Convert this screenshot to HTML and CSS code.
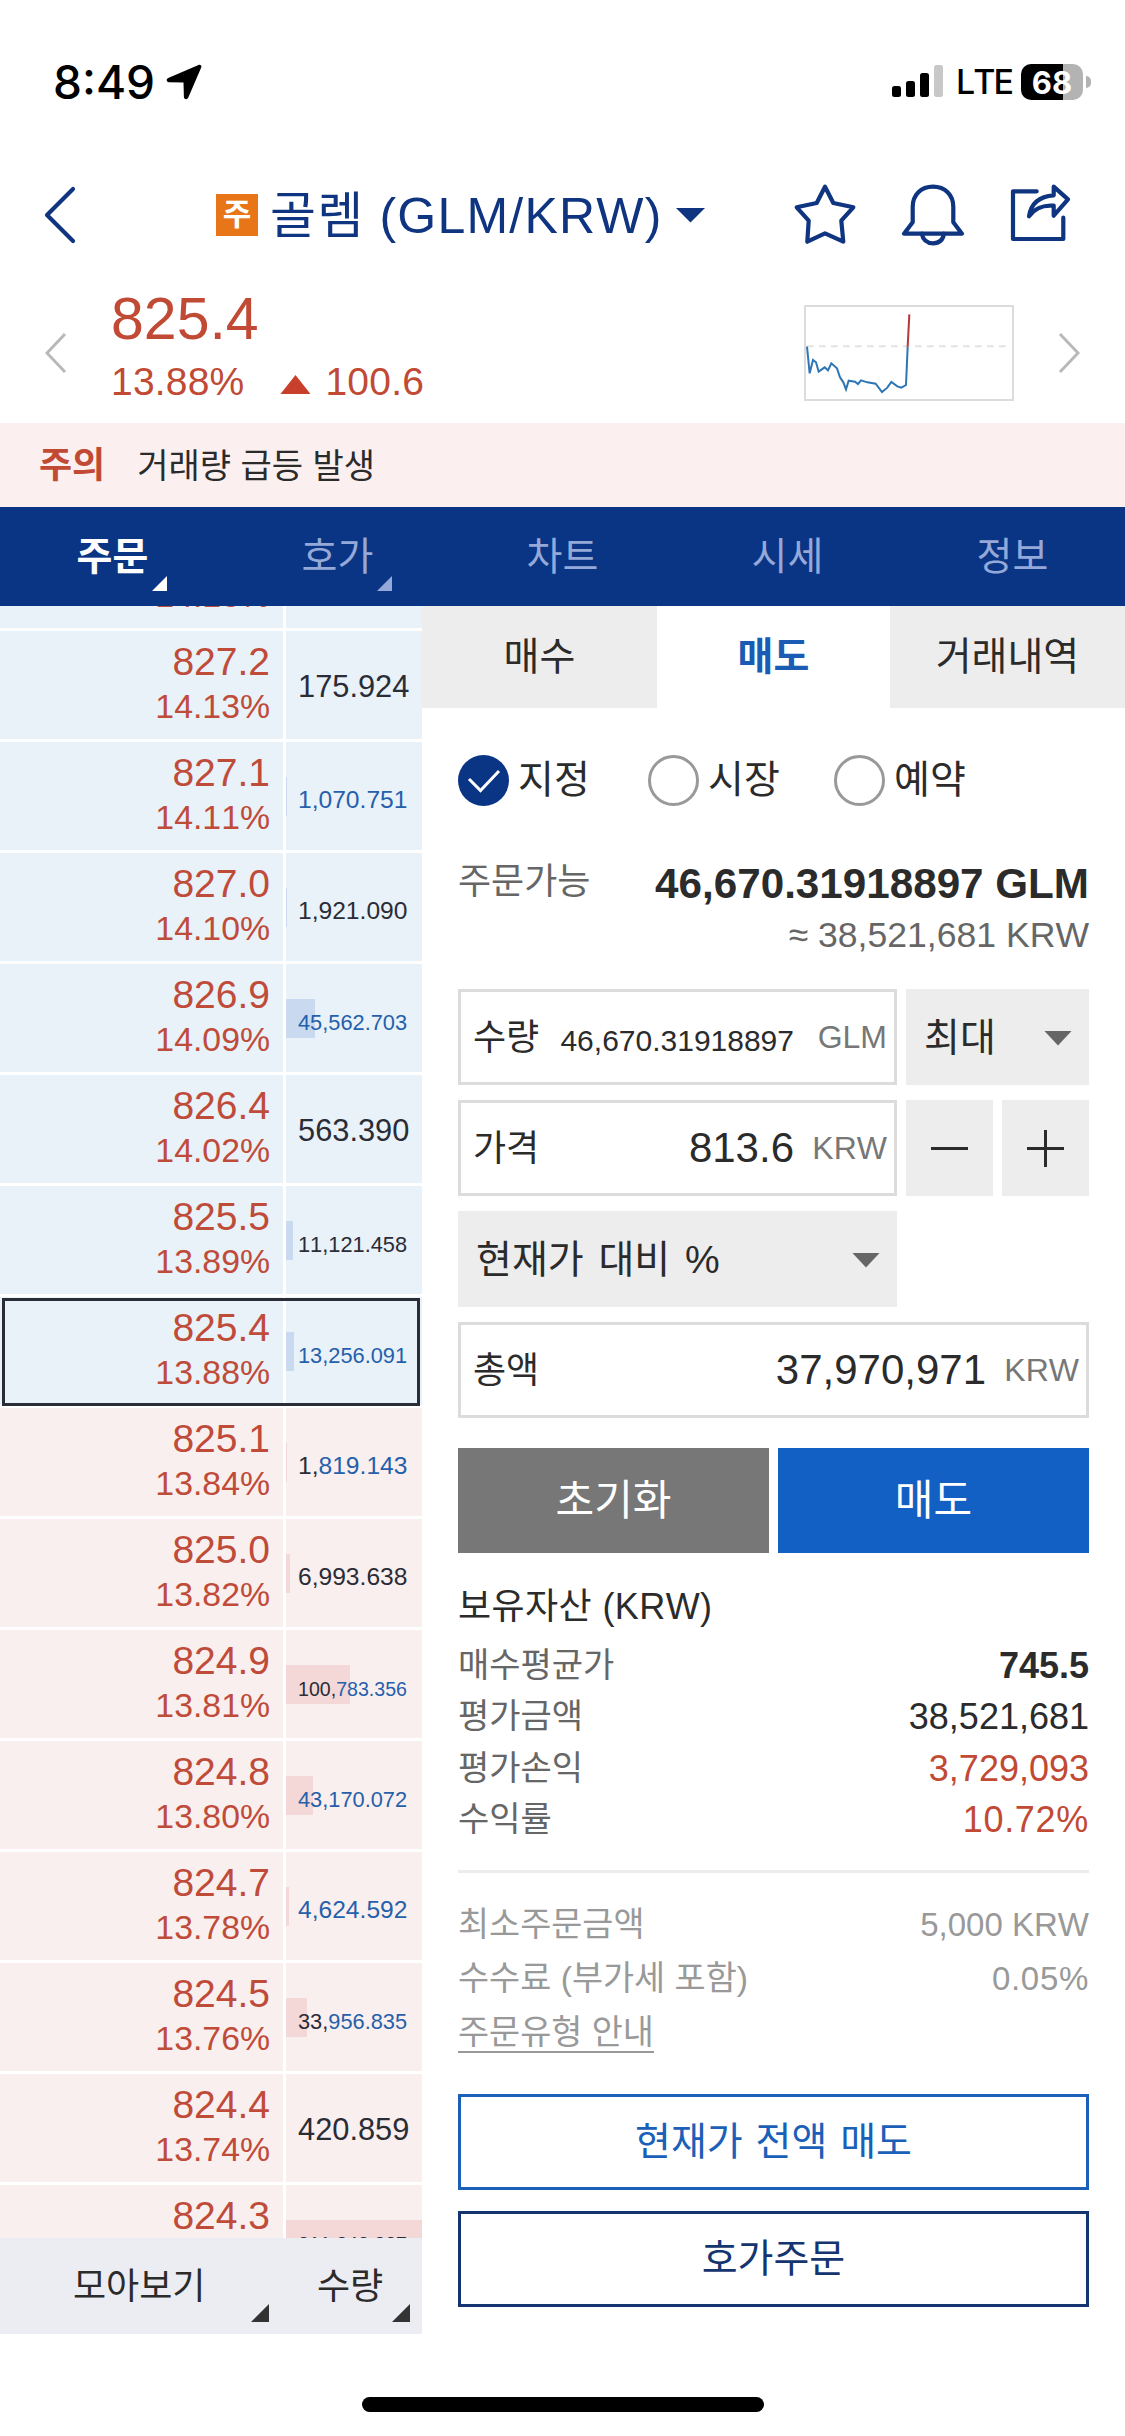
FILE: index.html
```html
<!DOCTYPE html>
<html lang="ko">
<head>
  <meta charset="UTF-8">
  <meta name="viewport" content="width=device-width, initial-scale=1.0">
  <title>골렘 (GLM/KRW)</title>
  <link rel="stylesheet" href="styles.css">
</head>
<body>
  <div class="screen">
    <!-- Status Bar -->
    <div class="status-bar">
      <span class="clock">8:49</span>
      <svg class="location" width="36" height="36" viewBox="0 0 36 36"><path d="M32.500 1 C34.500 .2 36 1.800 35.200 3.600 L22.300 33.500 C21.200 36 18 35.600 17.900 33 L17.500 18.500 L3 18.200 C.4 18.100 -.2 15 2.200 14 Z"/></svg>
      <div class="status-right">
        <svg class="signal" width="52" height="34" viewBox="0 0 52 34">
          <rect x="0" y="21" width="9" height="11" rx="2.500"/>
          <rect x="14" y="16" width="9" height="16" rx="2.500"/>
          <rect x="28" y="8" width="9" height="24" rx="2.500"/>
          <rect class="off" x="42" y="0" width="9" height="32" rx="2.500"/>
        </svg>
        <span class="network">LTE</span>
        <span class="battery">68</span>
        <span class="battery-cap"></span>
      </div>
    </div>

    <!-- Header -->
    <header class="header">
      <svg class="back" width="34" height="60" viewBox="0 0 34 60"><path d="M30 4 L4 30 L30 56"/></svg>
      <div class="title">
        <span class="badge">주</span>
        <h1>골렘 (GLM/KRW)</h1>
        <span class="caret"></span>
      </div>
      <div class="icons">
        <svg width="64" height="64" viewBox="0 0 64 64"><path d="M32 3.700 L40.300 20 L60.300 24.300 L48.300 37.700 L50.300 58.700 L32 50.300 L14.300 58.700 L15.700 37.700 L3.700 24.300 L23.700 20 Z"/></svg>
        <svg width="66" height="64" viewBox="0 0 66 64"><path d="M12.700 39.300 V24 C12.700 12 21 3.700 33 3.700 C45 3.700 53.300 12 53.300 24 V39.300 L62 50.700 H4 Z"/><path d="M21.700 50.700 C23 57 27 60.300 33 60.300 C39 60.300 43 57 44 50.700"/></svg>
        <svg width="64" height="64" viewBox="0 0 64 64"><path d="M27.700 8.300 H4 V56 H54.300 V34.700"/><path d="M44.700 3.700 L59 16.300 L44.700 32.700 V22.700 C34 21.700 25 26 20 33.300 C22 20 31 13.300 44.700 12.300 Z"/></svg>
      </div>
    </header>

    <!-- Ticker -->
    <section class="ticker">
      <svg class="arrow" width="22" height="42" viewBox="0 0 22 42"><path d="M20 2 L2 21 L20 40"/></svg>
      <div class="ticker-price">
        <div class="last">825.4</div>
        <div class="change"><span>13.88%</span><i class="up"></i><span>100.6</span></div>
      </div>
      <svg class="chart" width="210" height="96" viewBox="0 0 630 288">
        <rect x="3" y="3" width="624" height="282" class="frame"/>
        <path class="base" d="M9 124 H612"/>
        <path class="down-line" d="M9 125 L17 205 L27 165 L36 172 L44 200 L62 187 L72 196 L82 175 L99 190 L108 217 L118 232 L126 253 L134 227 L153 230 L162 237 L171 226 L190 232 L215 236 L234 261 L250 248 L262 231 L280 244 L292 248 L306 240 L311 125"/>
        <path class="up-line" d="M311 125 L316 28"/>
      </svg>
      <svg class="arrow" width="22" height="42" viewBox="0 0 22 42"><path d="M2 2 L20 21 L2 40"/></svg>
    </section>

    <!-- Warning -->
    <div class="notice"><strong>주의</strong><span>거래량 급등 발생</span></div>

    <!-- Main Tabs -->
    <nav class="nav">
      <a class="active more">주문</a>
      <a class="more">호가</a>
      <a>차트</a>
      <a>시세</a>
      <a>정보</a>
    </nav>

    <main class="main">
      <!-- Order Book -->
      <section class="book">
        <div class="book-list">
          <div class="row ask first"><div class="price"><span>14.15%</span></div><div class="qty"></div></div>
          <div class="row ask"><div class="price"><b>827.2</b><span>14.13%</span></div><div class="qty"><span class="n6">175.924</span></div></div>
          <div class="row ask"><div class="price"><b>827.1</b><span>14.11%</span></div><div class="qty"><i class="bar" style="width: 1px"></i><span class="n7 blue">1,070.751</span></div></div>
          <div class="row ask"><div class="price"><b>827.0</b><span>14.10%</span></div><div class="qty"><i class="bar" style="width: 1px"></i><span class="n7">1,921.090</span></div></div>
          <div class="row ask"><div class="price"><b>826.9</b><span>14.09%</span></div><div class="qty"><i class="bar" style="width: 29px"></i><span class="n8 blue">45,562.703</span></div></div>
          <div class="row ask"><div class="price"><b>826.4</b><span>14.02%</span></div><div class="qty"><span class="n6">563.390</span></div></div>
          <div class="row ask"><div class="price"><b>825.5</b><span>13.89%</span></div><div class="qty"><i class="bar" style="width: 7px"></i><span class="n8">11,121.458</span></div></div>
          <div class="row ask current"><div class="price"><b>825.4</b><span>13.88%</span></div><div class="qty"><i class="bar" style="width: 8px"></i><span class="n8 blue">13,256.091</span></div></div>
          <div class="row bid"><div class="price"><b>825.1</b><span>13.84%</span></div><div class="qty"><i class="bar" style="width: 1px"></i><span class="n7">1,<em>819.143</em></span></div></div>
          <div class="row bid"><div class="price"><b>825.0</b><span>13.82%</span></div><div class="qty"><i class="bar" style="width: 4px"></i><span class="n7">6,993.638</span></div></div>
          <div class="row bid"><div class="price"><b>824.9</b><span>13.81%</span></div><div class="qty"><i class="bar" style="width: 64px"></i><span class="n9">100,<em>783.356</em></span></div></div>
          <div class="row bid"><div class="price"><b>824.8</b><span>13.80%</span></div><div class="qty"><i class="bar" style="width: 27px"></i><span class="n8 blue">43,170.072</span></div></div>
          <div class="row bid"><div class="price"><b>824.7</b><span>13.78%</span></div><div class="qty"><i class="bar" style="width: 3px"></i><span class="n7 blue">4,624.592</span></div></div>
          <div class="row bid"><div class="price"><b>824.5</b><span>13.76%</span></div><div class="qty"><i class="bar" style="width: 21px"></i><span class="n8">33,<em>956.835</em></span></div></div>
          <div class="row bid"><div class="price"><b>824.4</b><span>13.74%</span></div><div class="qty"><span class="n6">420.859</span></div></div>
          <div class="row bid"><div class="price"><b>824.3</b></div><div class="qty"><i class="bar" style="width: 136px"></i><span class="n9">211,248.237</span></div></div>
        </div>
        <div class="book-footer">
          <span class="group">모아보기</span>
          <span class="amount">수량</span>
        </div>
      </section>

      <!-- Order Form -->
      <section class="order">
        <div class="tabs">
          <a>매수</a>
          <a class="active">매도</a>
          <a>거래내역</a>
        </div>

        <div class="form">
          <div class="radios">
            <label><i class="radio checked"><svg width="51" height="51" viewBox="0 0 51 51"><path d="M11 24 L22.500 35.500 L41 16"/></svg></i>지정</label>
            <label><i class="radio"></i>시장</label>
            <label><i class="radio"></i>예약</label>
          </div>

          <div class="available">
            <span class="label">주문가능</span>
            <div class="balance"><strong>46,670.31918897 GLM</strong><span>≈ 38,521,681 KRW</span></div>
          </div>

          <div class="fields">
            <div class="field"><span>수량</span><b class="small">46,670.31918897</b><em>GLM</em></div>
            <div class="select max">최대<i class="caret"></i></div>
            <div class="field"><span>가격</span><b>813.6</b><em>KRW</em></div>
            <button class="step"><svg width="37" height="37" viewBox="0 0 37 37"><path d="M0 18.500 H37"/></svg></button>
            <button class="step"><svg width="37" height="37" viewBox="0 0 37 37"><path d="M0 18.500 H37 M18.500 0 V37"/></svg></button>
            <div class="select percent">현재가 대비 %<i class="caret"></i></div>
            <div class="field total"><span>총액</span><b>37,970,971</b><em>KRW</em></div>
          </div>

          <div class="actions">
            <button class="reset">초기화</button>
            <button class="sell">매도</button>
          </div>

          <h2>보유자산 (KRW)</h2>
          <dl class="assets">
            <dt>매수평균가</dt><dd class="strong">745.5</dd>
            <dt>평가금액</dt><dd>38,521,681</dd>
            <dt>평가손익</dt><dd class="red">3,729,093</dd>
            <dt>수익률</dt><dd class="red rate">10.72%</dd>
          </dl>

          <dl class="info">
            <dt>최소주문금액</dt><dd>5,000 KRW</dd>
            <dt>수수료 (부가세 포함)</dt><dd class="rate">0.05%</dd>
            <dt><a class="guide">주문유형 안내</a></dt>
          </dl>

          <button class="outline">현재가 전액 매도</button>
          <button class="outline navy">호가주문</button>
        </div>
      </section>
    </main>

    <div class="home-indicator"></div>
  </div>
</body>
</html>
```
FILE: styles.css
```css
* {
  box-sizing: border-box;
}
body {
  margin: 0;
  background: #fff;
  color: #2b2b2b;
  font-family: "Liberation Sans", "Noto Sans CJK KR", sans-serif;
  font-kerning: none;
  line-height: 1.2;
}
h1, h2, dl, dd {
  margin: 0;
  font-weight: 400;
}
button {
  padding: 0;
  border: none;
  font-family: inherit;
  line-height: 1.2;
}
i, em {
  font-style: normal;
}
svg {
  display: block;
  fill: none;
}
.screen {
  width: 1125px;
  height: 2436px;
  overflow: hidden;
}

/* status bar */
.status-bar {
  display: flex;
  align-items: center;
  height: 160px;
  padding: 4px 34px 0 53px;
  color: #000;
  font-family: Inter, sans-serif;
}
.clock {
  width: 113px;
  font-size: 46px;
  font-weight: 500;
  line-height: 50px;
}
.location {
  fill: #000;
}
.status-right {
  display: flex;
  align-items: center;
  margin-left: auto;
}
.signal {
  fill: #000;
}
.signal .off {
  fill: #c8c8c8;
}
.network {
  width: 77px;
  padding-left: 12px;
  font-size: 34px;
  font-weight: 500;
  letter-spacing: -2px;
}
.battery {
  width: 62px;
  height: 36px;
  border-radius: 10px;
  background: linear-gradient(90deg, #000 68%, #b3b3b3 68%);
  color: #fff;
  font-size: 31px;
  font-weight: 700;
  line-height: 37px;
  text-align: center;
}
.battery-cap {
  width: 5px;
  height: 12px;
  margin-left: 3px;
  border-radius: 0 6px 6px 0;
  background: #b3b3b3;
}

/* header */
.header {
  display: flex;
  align-items: center;
  height: 110px;
  padding: 0 52px 0 43px;
  color: #0f3480;
}
.header svg {
  stroke: #0f3480;
  stroke-width: 4.2;
  stroke-linecap: round;
  stroke-linejoin: round;
}
.title {
  display: flex;
  align-items: center;
  margin-left: 139px;
}
.badge {
  width: 42px;
  height: 42px;
  margin-right: 12px;
  background: #e87518;
  color: #fff;
  font-size: 31px;
  font-weight: 700;
  line-height: 42px;
  text-align: center;
}
.title h1 {
  padding-top: 2px;
  font-size: 50px;
  letter-spacing: 1.2px;
  line-height: 62px;
  white-space: nowrap;
}
.caret {
  width: 30px;
  height: 15px;
  background: currentColor;
  clip-path: polygon(0 0, 100% 0, 50% 100%);
}
.title .caret {
  margin-left: 13px;
}
.icons {
  display: flex;
  gap: 43px;
  margin-left: auto;
}

/* ticker */
.ticker {
  display: flex;
  height: 153px;
  padding: 0 45px;
  color: #c14a35;
}
.arrow {
  margin-top: 62px;
  stroke: #b9b9b9;
  stroke-width: 3;
}
.ticker-price {
  margin-left: 44px;
}
.last {
  margin-top: 19px;
  font-size: 59px;
  line-height: 60px;
}
.change {
  display: flex;
  align-items: center;
  margin-top: 12px;
  font-size: 39px;
  letter-spacing: 0.2px;
  line-height: 42px;
}
.up {
  width: 30px;
  height: 19px;
  margin: 5px 15px 0 36px;
  background: #c8402c;
  clip-path: polygon(50% 0, 100% 100%, 0 100%);
}
.chart {
  margin: 35px 44px 0 auto;
}
.chart .frame {
  stroke: #dcdcdc;
  stroke-width: 6;
}
.chart .base {
  stroke: #e3e3e3;
  stroke-width: 6;
  stroke-dasharray: 20 16;
}
.chart .down-line {
  stroke: #2d76b3;
  stroke-width: 6;
}
.chart .up-line {
  stroke: #b8383a;
  stroke-width: 6;
}

/* warning */
.notice {
  display: flex;
  align-items: center;
  gap: 32px;
  height: 84px;
  padding: 2px 0 0 39px;
  background: #fbeff0;
  font-size: 34px;
}
.notice strong {
  color: #c14a35;
  font-size: 36px;
}

/* main tabs */
.nav {
  display: flex;
  height: 99px;
  background: #0a3484;
}
.nav a {
  position: relative;
  flex: 1;
  color: #94a9d8;
  font-size: 39px;
  line-height: 100px;
  text-align: center;
}
.nav .active {
  color: #fff;
  font-weight: 700;
}
.more::after {
  content: "";
  position: absolute;
  right: 58px;
  bottom: 15px;
  width: 15px;
  height: 15px;
  background: currentColor;
  clip-path: polygon(100% 0, 100% 100%, 0 100%);
}
.main {
  display: flex;
  height: 1728px;
}

/* order book */
.book {
  width: 422px;
}
.book-list {
  display: flex;
  flex-direction: column;
  height: 1632px;
  overflow: hidden;
}
.row {
  display: flex;
  flex: none;
  gap: 3px;
  height: 111px;
  padding-bottom: 3px;
}
.row.first {
  margin-top: -86px;
}
.first .price {
  padding-top: 52px;
}
.price {
  width: 283px;
  padding: 10px 13px 0 0;
  color: #bf4b39;
  text-align: right;
}
.price b {
  display: block;
  font-size: 39px;
  font-weight: 400;
  line-height: 42px;
}
.price span {
  display: block;
  font-size: 33.8px;
  line-height: 46px;
}
.qty {
  position: relative;
  width: 136px;
  padding-left: 12px;
  color: #2a2c36;
  line-height: 121px;
}
.ask > div {
  background: #e9f1f9;
}
.bid > div {
  background: #faefef;
}
.qty span {
  position: relative;
  line-height: 0;
}
.n6 { font-size: 30.8px; }
.n7 { font-size: 24.6px; }
.n8 { font-size: 21.8px; }
.n9 { font-size: 19.6px; }
.qty .blue, .qty em {
  color: #2560ab;
}
.bar {
  position: absolute;
  top: 35px;
  left: 0;
  height: 39px;
  background: #c9daf0;
}
.bid .bar {
  background: #f4d8d8;
}
.row.current {
  position: relative;
}
.current::after {
  content: "";
  position: absolute;
  inset: 1px 2px 2px;
  border: 3px solid #2a2c36;
}
.book-footer {
  display: flex;
  height: 96px;
  background: #ecedf2;
  font-size: 36px;
  line-height: 97px;
}
.book-footer span {
  position: relative;
}
.group {
  width: 286px;
  padding-left: 73px;
}
.amount {
  width: 136px;
  padding-left: 31px;
}
.book-footer span::after {
  content: "";
  position: absolute;
  right: 17px;
  bottom: 12px;
  width: 18px;
  height: 18px;
  background: #333;
  clip-path: polygon(100% 0, 100% 100%, 0 100%);
}
.book-footer .amount::after {
  right: 12px;
}

/* order form */
.order {
  flex: 1;
}
.tabs {
  display: grid;
  grid-template-columns: 235px 233px 235px;
  height: 102px;
}
.tabs a {
  background: #ededed;
  font-size: 39px;
  line-height: 102px;
  text-align: center;
}
.tabs .active {
  background: #fff;
  color: #1a5cb4;
  font-weight: 700;
}
.form {
  padding: 0 36px;
}
.radios {
  display: flex;
  margin-top: 47px;
}
.radios label {
  display: flex;
  align-items: center;
  width: 186px;
  gap: 9px;
  font-size: 39px;
}
.radios label:first-child {
  width: 190px;
}
.radio {
  width: 51px;
  height: 51px;
  border: 3px solid #999;
  border-radius: 50%;
}
.radio.checked {
  border: none;
  background: #0a3484;
}
.radio path {
  stroke: #fff;
  stroke-width: 3;
}
.available {
  display: flex;
  justify-content: space-between;
  height: 183px;
  padding-top: 51px;
  color: #666;
  font-size: 36px;
}
.label {
  line-height: 49px;
}
.balance {
  text-align: right;
}
.balance strong {
  display: block;
  color: #2b2b2b;
  font-size: 42.2px;
  line-height: 53px;
}
.balance span {
  display: block;
  font-size: 35.6px;
  line-height: 51px;
}
.fields {
  display: grid;
  grid-template-columns: 439px 87px 87px;
  grid-auto-rows: 96px;
  gap: 15px 9px;
}
.field {
  display: flex;
  align-items: center;
  padding: 1px 7px 0 12px;
  border: 3px solid #dcdcdc;
  font-size: 36px;
}
.field b {
  margin-left: auto;
  font-size: 42px;
  font-weight: 400;
}
.field .small {
  padding-top: 7px;
  font-size: 30px;
}
.field em {
  width: 93px;
  color: #777;
  font-size: 32px;
  text-align: right;
}
.select {
  display: flex;
  align-items: center;
  justify-content: space-between;
  padding: 2px 17px 0 18px;
  background: #ededed;
  font-size: 39px;
  word-spacing: 4px;
}
.select .caret {
  width: 28px;
  background: #666;
}
.max {
  grid-column: 2 / 4;
}
.percent {
  grid-column: 1;
}
.total {
  grid-column: 1 / 4;
}
.step {
  display: flex;
  align-items: center;
  justify-content: center;
  background: #ededed;
}
.step path {
  stroke: #2b2b2b;
  stroke-width: 3;
}
.actions {
  display: grid;
  grid-template-columns: 1fr 1fr;
  gap: 9px;
  margin-top: 30px;
}
.actions button {
  height: 105px;
  padding-top: 2px;
  background: #777;
  color: #fff;
  font-size: 42px;
}
.actions .sell {
  background: #1260c4;
}
h2 {
  margin-top: 30px;
  font-size: 36px;
  letter-spacing: 0.4px;
  line-height: 48px;
}
.assets {
  display: grid;
  grid-template-columns: 1fr auto;
  grid-auto-rows: 51.3px;
  margin-top: 9px;
  padding-bottom: 25px;
  border-bottom: 3px solid #ececec;
  font-size: 34px;
  line-height: 51px;
}
.assets dt {
  color: #666;
}
.assets dd {
  font-size: 36px;
  text-align: right;
}
.assets .strong {
  font-weight: 700;
}
.assets .red {
  color: #c14a35;
}
.assets .rate, .info .rate {
  letter-spacing: 0.7px;
}
.info {
  display: grid;
  grid-template-columns: 1fr auto;
  grid-auto-rows: 54px;
  margin-top: 24px;
  color: #999;
  font-size: 33.8px;
  line-height: 55px;
}
.info dd {
  font-size: 33px;
  text-align: right;
}
.guide {
  border-bottom: 2px solid #999;
}
.outline {
  display: block;
  width: 100%;
  height: 96px;
  margin-top: 21px;
  padding-top: 1px;
  border: 3px solid #1a5fb8;
  background: #fff;
  color: #1a5fb8;
  font-size: 39px;
  word-spacing: 2px;
}
.info + .outline {
  margin-top: 35px;
}
.outline.navy {
  border-color: #14356f;
  color: #14356f;
}
.home-indicator {
  width: 402px;
  height: 15px;
  margin: 63px auto 0;
  border-radius: 8px;
  background: #000;
}
```
